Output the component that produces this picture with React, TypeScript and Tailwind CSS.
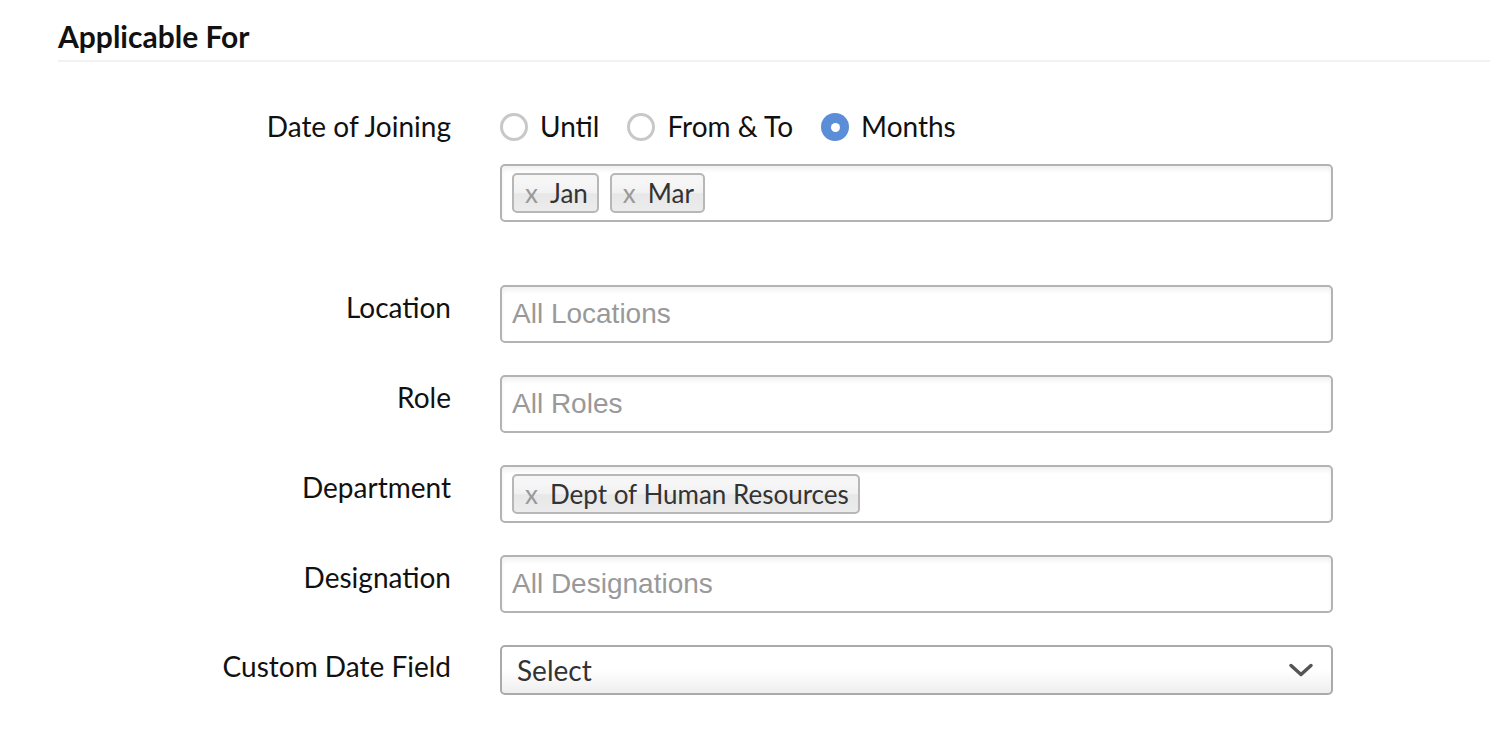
import React from 'react';

const labelClass = "text-right text-[28px] leading-[34px] text-[#111]";
const boxClass = "h-[58px] w-full rounded-[5px] border-2 border-[#b3b3b3] bg-white shadow-[inset_0_4px_4px_rgba(0,0,0,0.05)] flex items-center px-[10px] gap-[11px]";

const Tag: React.FC<{ text: string }> = ({ text }) => (
    <span className="h-[40px] flex items-center rounded-[5px] border-2 border-[#b7b7b7] bg-[linear-gradient(#f6f6f6_20%,#f1f1f1_50%,#e7e7e7_52%,#ececec_100%)] pl-[11px] pr-[9px] text-[26px] text-[#333]">
        <span className="text-[#999] mr-[12px] text-[26px] leading-none">x</span>
        {text}
    </span>
);

const Radio: React.FC<{ label: string; checked?: boolean }> = ({ label, checked }) => (
    <label className="flex items-start gap-[12px] mr-[28px]">
        {checked ? (
            <span className="mt-[6px] w-[28px] h-[28px] rounded-full bg-[#5b8dd9] flex items-center justify-center">
                <span className="w-[9px] h-[9px] rounded-full bg-white"></span>
            </span>
        ) : (
            <span className="mt-[6px] w-[28px] h-[28px] rounded-full border-[3px] border-[#c8c8c8] bg-white"></span>
        )}
        <span className="pt-[2px] text-[28px] leading-[34px] text-[#111]">{label}</span>
    </label>
);

const Placeholder: React.FC<{ text: string }> = ({ text }) => (
    <div className={boxClass}>
        <span className="text-[28px] text-[#999] font-['Liberation_Sans',Arial,sans-serif]">{text}</span>
    </div>
);

const App: React.FC = () => {
    return (
        <div className="w-[1490px] h-[740px] bg-white font-['Lato',sans-serif] pl-[58px]">
            <div className="pt-[18px] pb-[6px] border-b-2 border-[#f2f2f2]">
                <h2 className="text-[30px] leading-[36px] font-bold text-[#111]">Applicable For</h2>
            </div>

            <div className="grid grid-cols-[393px_833px] gap-x-[49px] mt-[45px]">
                <div className={labelClass + " pt-[2px]"}>Date of Joining</div>
                <div>
                    <div className="flex items-start h-[36px]">
                        <Radio label="Until" />
                        <Radio label="From & To" />
                        <Radio label="Months" checked />
                    </div>
                    <div className={boxClass + " mt-[21px]"}>
                        <Tag text="Jan" />
                        <Tag text="Mar" />
                    </div>
                </div>

                <div className={labelClass + " mt-[63px] pt-[5px]"}>Location</div>
                <div className="mt-[63px]"><Placeholder text="All Locations" /></div>

                <div className={labelClass + " mt-[32px] pt-[5px]"}>Role</div>
                <div className="mt-[32px]"><Placeholder text="All Roles" /></div>

                <div className={labelClass + " mt-[32px] pt-[5px]"}>Department</div>
                <div className="mt-[32px]">
                    <div className={boxClass}>
                        <Tag text="Dept of Human Resources" />
                    </div>
                </div>

                <div className={labelClass + " mt-[32px] pt-[5px]"}>Designation</div>
                <div className="mt-[32px]"><Placeholder text="All Designations" /></div>

                <div className={labelClass + " mt-[32px] pt-[4px]"}>Custom Date Field</div>
                <div className="mt-[32px]">
                    <div className="h-[50px] w-full rounded-[5px] border-2 border-[#aaa] bg-[linear-gradient(to_top,#eeeeee_0%,#ffffff_50%)] flex items-center justify-between pl-[15px] pr-[17px]">
                        <span className="text-[28px] text-[#333]">Select</span>
                        <svg width="26" height="16" viewBox="0 0 26 16" fill="none">
                            <path d="M3 3.5 L13 12.5 L23 3.5" stroke="#555" strokeWidth="3.5" strokeLinecap="round" strokeLinejoin="round" />
                        </svg>
                    </div>
                </div>
            </div>
        </div>
    );
};

export default App;
